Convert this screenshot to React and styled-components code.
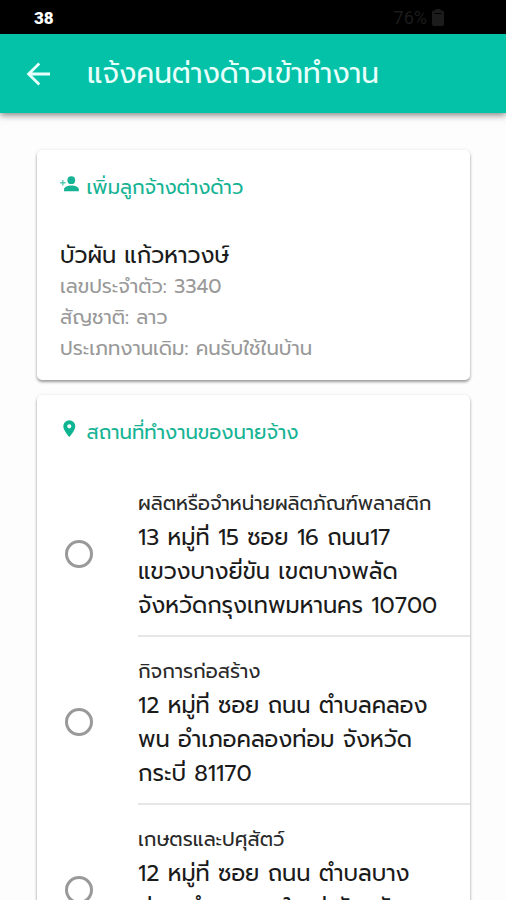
import React from 'react';
import styled, { createGlobalStyle } from 'styled-components';

const workplaces = [
  {
    type: 'ผลิตหรือจำหน่ายผลิตภัณฑ์พลาสติก',
    address: ['13 หมู่ที่ 15 ซอย 16 ถนน17', 'แขวงบางยี่ขัน เขตบางพลัด', 'จังหวัดกรุงเทพมหานคร 10700'],
  },
  {
    type: 'กิจการก่อสร้าง',
    address: ['12 หมู่ที่ ซอย ถนน ตำบลคลอง', 'พน อำเภอคลองท่อม จังหวัด', 'กระบี่ 81170'],
  },
  {
    type: 'เกษตรและปศุสัตว์',
    address: ['12 หมู่ที่ ซอย ถนน ตำบลบาง', 'ม่วง อำเภอบางใหญ่ จังหวัด'],
  },
];

export default function App() {
  return (
    <Screen>
      <GlobalStyle />
      <StatusBar>
        <Clock>38</Clock>
        <Battery>
          76%
          <svg width="12" height="17" viewBox="0 0 12 17" fill="currentColor">
            <path d="M3.5 0h5v1.500H10a2 2 0 0 1 2 2V15a2 2 0 0 1-2 2H2a2 2 0 0 1-2-2V3.500a2 2 0 0 1 2-2h1.500z" />
            <path d="M2.500 4.500h7" stroke="#000" strokeWidth="1" />
          </svg>
        </Battery>
      </StatusBar>
      <AppBar>
        <svg width="24" height="24" viewBox="0 0 24 24" fill="none" stroke="#e8fffb" strokeWidth="2.8">
          <path d="M24 12H2.500M13.300 1.400L2.600 12l10.700 10.600" />
        </svg>
        <Title>แจ้งคนต่างด้าวเข้าทำงาน</Title>
      </AppBar>
      <Content>
        <EmployeeCard>
          <CardTitle>
            <PersonAddIcon />
            <span>เพิ่มลูกจ้างต่างด้าว</span>
          </CardTitle>
          <Name>บัวผัน แก้วหาวงษ์</Name>
          <Detail>เลขประจำตัว: 3340</Detail>
          <Detail>สัญชาติ: ลาว</Detail>
          <Detail>ประเภทงานเดิม: คนรับใช้ในบ้าน</Detail>
        </EmployeeCard>
        <WorkplaceCard>
          <CardTitle>
            <PlaceIcon />
            <span>สถานที่ทำงานของนายจ้าง</span>
          </CardTitle>
          <List>
            {workplaces.map((place) => (
              <Item key={place.type}>
                <Radio />
                <ItemBody>
                  <Kind>{place.type}</Kind>
                  {place.address.map((line) => (
                    <AddressLine key={line}>{line}</AddressLine>
                  ))}
                </ItemBody>
              </Item>
            ))}
          </List>
        </WorkplaceCard>
      </Content>
    </Screen>
  );
}

function PersonAddIcon() {
  return (
    <svg width="20" height="20" viewBox="0 0 20 20" fill="#16b394">
      <circle cx="11.3" cy="6.2" r="3.9" />
      <path d="M4 17.200v-2c0-2.500 4-3.800 7.400-3.800s7.400 1.300 7.400 3.800v2z" />
      <path opacity="0.75" d="M2.200 6h1.300v2.100h2v1.300h-2v2.100H2.200V9.400h-2V8.100h2z" />
    </svg>
  );
}

function PlaceIcon() {
  return (
    <svg width="20" height="20" viewBox="0 0 20 20" fill="#0db492">
      <path
        fillRule="evenodd"
        d="M9.300 1.300a6 6 0 0 0-6 6c0 4.400 6 10.700 6 10.700s6-6.300 6-10.700a6 6 0 0 0-6-6zm0 3.900a2.100 2.100 0 1 1 0 4.200 2.100 2.100 0 0 1 0-4.200z"
      />
    </svg>
  );
}

const GlobalStyle = createGlobalStyle`
  body {
    margin: 0;
    background: #fdfdfd;
    font-family: Prompt, Kanit, "Noto Sans Thai", "Noto Sans", "Open Sans", sans-serif;
  }
  * {
    box-sizing: border-box;
  }
`;

const Screen = styled.div`
  height: 900px;
  overflow: hidden;
`;

const StatusBar = styled.div`
  display: flex;
  justify-content: space-between;
  align-items: center;
  height: 34px;
  padding: 1px 62px 0 34px;
  background: #000;
`;

const Clock = styled.span`
  color: #fff;
  font: 900 17px Roboto, sans-serif;
`;

const Battery = styled.span`
  display: flex;
  align-items: center;
  gap: 5px;
  color: #1c1c1c;
  font: 18px Roboto, sans-serif;
`;

const AppBar = styled.header`
  display: flex;
  align-items: center;
  gap: 37px;
  height: 79px;
  padding-left: 26px;
  background: #03c2a8;
  box-shadow: 0 2px 7px rgba(0, 0, 0, 0.5);
`;

const Title = styled.h1`
  margin: 0;
  color: #e8fffb;
  font-size: 28px;
  font-weight: 400;
  line-height: 40px;
  white-space: nowrap;
`;

const Content = styled.main`
  display: flex;
  flex-direction: column;
  gap: 15px;
  padding: 37px 36px 0 37px;
`;

const Card = styled.section`
  border-radius: 5px;
  background: #fff;
  box-shadow: 0 2px 3px rgba(0, 0, 0, 0.38), 0 0 4px rgba(0, 0, 0, 0.06);
`;

const EmployeeCard = styled(Card)`
  height: 230px;
  padding: 21px 23px 0;
`;

const WorkplaceCard = styled(Card)`
  height: 620px;
  padding: 21px 0 0 23px;
`;

const CardTitle = styled.div`
  display: flex;
  align-items: center;
  gap: 6.5px;
  height: 32px;
  color: #16b394;
  font-size: 19.7px;
  white-space: nowrap;

  svg {
    margin-bottom: 6px;
  }
`;

const Name = styled.div`
  margin-top: 37px;
  color: #1b1b1b;
  font-size: 22.5px;
  line-height: 31px;
`;

const Detail = styled.div`
  color: #999;
  font-size: 19.65px;
  line-height: 31px;
  white-space: nowrap;
`;

const List = styled.div`
  display: flex;
  flex-direction: column;
  margin-top: 21px;
`;

const Item = styled.div`
  display: flex;
  align-items: center;
  gap: 45px;
  height: 168px;
  padding-left: 5px;
`;

const Radio = styled.span`
  flex: none;
  width: 28px;
  height: 28px;
  margin-top: 2px;
  border: 3px solid #999;
  border-radius: 50%;
`;

const ItemBody = styled.div`
  flex: 1;
  height: 168px;
  padding-top: 19px;
  border-bottom: 2px solid #e6e6e6;
`;

const Kind = styled.div`
  margin-bottom: 1px;
  color: #2a2a2a;
  font-size: 19.7px;
  line-height: 32px;
  white-space: nowrap;
`;

const AddressLine = styled.div`
  color: #1b1b1b;
  font-size: 22.55px;
  line-height: 34px;
  white-space: nowrap;
`;
